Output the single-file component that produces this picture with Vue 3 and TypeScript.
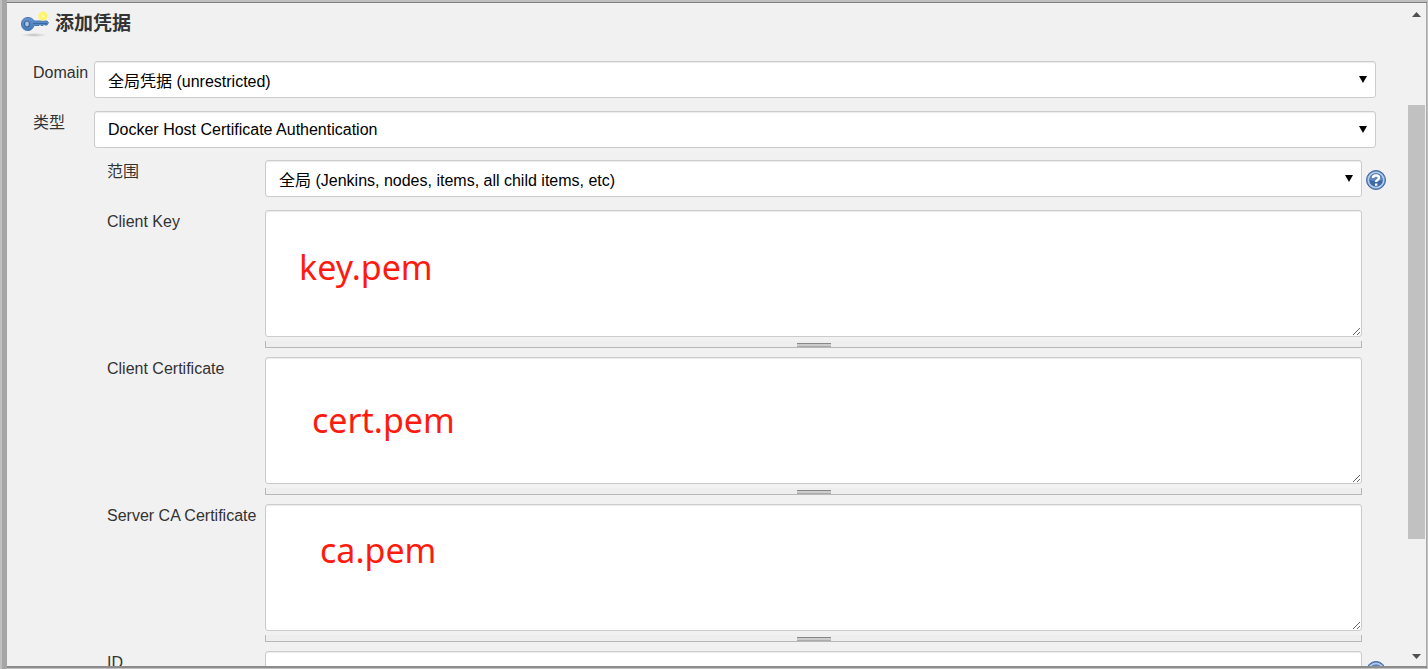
<script setup lang="ts">
import { ref } from 'vue'

interface KeyField {
  id: string
  label: string
  note: string
  value: string
}

const domain = ref('global')
const kind = ref('docker')
const scope = ref('global')
const credentialId = ref('')
const fields = ref<KeyField[]>([
  { id: 'client-key', label: 'Client Key', note: 'key.pem', value: '' },
  { id: 'client-cert', label: 'Client Certificate', note: 'cert.pem', value: '' },
  { id: 'server-ca', label: 'Server CA Certificate', note: 'ca.pem', value: '' },
])
</script>

<template>
  <div class="backdrop">
    <div class="behind">Content Token Reference</div>
    <main class="dialog">
      <form class="content" @submit.prevent>
        <h1 class="title">
          <svg class="key" viewBox="0 0 32 28" aria-hidden="true">
            <defs>
              <radialGradient id="glow">
                <stop offset="0" stop-color="#ffffc8" />
                <stop offset="0.45" stop-color="#fff458" />
                <stop offset="0.75" stop-color="#fff36b" stop-opacity="0.8" />
                <stop offset="1" stop-color="#fff78a" stop-opacity="0" />
              </radialGradient>
              <linearGradient id="steel" x1="0" y1="0" x2="0" y2="1">
                <stop offset="0" stop-color="#6795cf" />
                <stop offset="1" stop-color="#4379ba" />
              </linearGradient>
              <radialGradient id="shade">
                <stop offset="0" stop-color="#777" stop-opacity="0.4" />
                <stop offset="1" stop-color="#777" stop-opacity="0" />
              </radialGradient>
            </defs>
            <ellipse cx="13" cy="25" rx="13" ry="2" fill="url(#shade)" />
            <path
              d="M7 7.500C10 7.500 12 9 13 11H26L27.500 12.500 26 15H24L23 14.500 22 15.500H20L19 14.500 18 15.500H13C12 18.500 10 20.500 7 20.500C3 20.500 0.500 18 0.500 14S3 7.500 7 7.500Z"
              fill="url(#steel)" stroke="#4877b3" stroke-width="1"
            />
            <path d="M12 13.500H26" stroke="#3768a5" stroke-width="1" />
            <ellipse cx="6" cy="14" rx="2.5" ry="3" fill="#a9c4e6" stroke="#3b659c" stroke-width="1.2" />
            <circle cx="22" cy="6" r="5.5" fill="url(#glow)" />
          </svg>
          添加凭据
        </h1>

        <div class="row">
          <label class="label" for="domain">Domain</label>
          <div class="picker">
            <select id="domain" v-model="domain" class="control cjk">
              <option value="global">全局凭据 (unrestricted)</option>
            </select>
            <svg class="arrow" viewBox="0 0 8 8" aria-hidden="true"><path d="M0 1H8L4 8Z" /></svg>
          </div>
        </div>
        <div class="row">
          <label class="label" for="kind">类型</label>
          <div class="picker">
            <select id="kind" v-model="kind" class="control">
              <option value="docker">Docker Host Certificate Authentication</option>
            </select>
            <svg class="arrow" viewBox="0 0 8 8" aria-hidden="true"><path d="M0 1H8L4 8Z" /></svg>
          </div>
        </div>

        <div class="details">
          <div class="row">
            <label class="label" for="scope">范围</label>
            <div class="picker">
              <select id="scope" v-model="scope" class="control cjk">
                <option value="global">全局 (Jenkins, nodes, items, all child items, etc)</option>
              </select>
              <svg class="arrow" viewBox="0 0 8 8" aria-hidden="true"><path d="M0 1H8L4 8Z" /></svg>
            </div>
            <button type="button" class="help" aria-label="Help">
              <svg viewBox="0 0 20 20" aria-hidden="true">
                <circle cx="10" cy="10" r="9.5" fill="#4f78b4" stroke="#456ca5" />
                <circle cx="10" cy="10" r="7.7" fill="#3d68a9" stroke="#b4cae6" stroke-width="1.8" />
                <path d="M3.500 10A6.500 6.500 0 0 1 16.500 10Q10 12 3.500 10Z" fill="#6288bf" />
                <path d="M7 8Q7 5.500 10 5.500T13 8Q13 9 11.500 10T10 12" fill="none" stroke="#fff" stroke-width="2.4" />
                <rect x="9" y="13.500" width="2.4" height="2.2" fill="#fff" />
              </svg>
            </button>
          </div>

          <div v-for="field in fields" :key="field.id" class="row tall">
            <label class="label" :for="field.id">{{ field.label }}</label>
            <div class="area">
              <textarea :id="field.id" v-model="field.value" class="control text"></textarea>
              <span class="note" :class="field.id">{{ field.note }}</span>
              <div class="grip"><span class="bar"></span></div>
            </div>
          </div>

          <div class="row">
            <label class="label" for="cred-id">ID</label>
            <div class="picker">
              <input id="cred-id" v-model="credentialId" type="text" class="control" />
            </div>
            <button type="button" class="help" aria-label="Help for ID">
              <svg viewBox="0 0 20 20" aria-hidden="true">
                <circle cx="10" cy="10" r="9.5" fill="#4f78b4" stroke="#456ca5" />
                <circle cx="10" cy="10" r="7.7" fill="#5c83bb" stroke="#b4cae6" stroke-width="1.8" />
              </svg>
            </button>
          </div>
        </div>
      </form>
      <div class="scroll" aria-hidden="true">
        <svg class="step" viewBox="0 0 17 17"><path d="M4 11H13L8.500 6Z" /></svg>
        <div class="track"><div class="thumb"></div></div>
        <svg class="step" viewBox="0 0 17 17"><path d="M4 6H13L8.500 11Z" /></svg>
      </div>
    </main>
  </div>
</template>

<style>
body {
  margin: 0;
  overflow: hidden;
}
</style>

<style scoped>
* {
  box-sizing: border-box;
}
.backdrop {
  position: relative;
  display: flex;
  height: 100vh;
  padding: 2px 1px 1px 7px;
  overflow: hidden;
  background: linear-gradient(90deg, #c0c0c0 2px, #a6a6a6 2px, #a6a6a6 7px, #c0c0c0 7px);
  color: #333;
  font: 16px/20px "Liberation Sans", "Noto Sans CJK SC", sans-serif;
}
.behind {
  position: absolute;
  top: -14px;
  left: 278px;
  color: #222;
  line-height: 18px;
}
.dialog {
  position: relative;
  display: flex;
  flex: 1;
  min-width: 0;
  overflow: hidden;
  border-top: 1px solid #808080;
  border-bottom: 2px solid #8c8c8c;
  background: #f1f1f1;
}
.content {
  flex: 1;
  min-width: 0;
  padding: 0 32px 0 26px;
}
.title {
  display: flex;
  align-items: center;
  height: 42px;
  margin: 0 0 16px -12px;
  gap: 2px;
  font-size: 19px;
  line-height: 24px;
}
.key {
  width: 32px;
  height: 28px;
}
.row {
  display: flex;
  align-items: flex-start;
  margin-bottom: 13px;
}
.label {
  flex: none;
  width: 61px;
  padding-top: 2px;
  white-space: nowrap;
}
.details {
  margin: -1px -10px 0 74px;
}
.details .label {
  width: 158px;
}
.picker,
.area {
  position: relative;
  flex: 1;
  min-width: 0;
}
.details .area {
  margin-right: 24px;
}
.control {
  display: block;
  width: 100%;
  height: 37px;
  margin: 0;
  padding: 0 30px 0 13px;
  appearance: none;
  border: 1px solid #ccc;
  border-radius: 3px;
  outline: none;
  background: #fff;
  box-shadow: inset 0 1px 1px rgba(0, 0, 0, 0.08);
  color: #000;
  font: inherit;
}
.cjk {
  padding-top: 4px;
}
.arrow {
  position: absolute;
  top: 14px;
  right: 9px;
  width: 8px;
  height: 8px;
  pointer-events: none;
}
.help {
  flex: none;
  width: 20px;
  height: 20px;
  margin: 10px 0 0 4px;
  padding: 0;
  border: 0;
  background: none;
}
.help svg {
  display: block;
}
.tall {
  margin-bottom: 9px;
}
.text {
  height: 127px;
  resize: vertical;
}
.note {
  position: absolute;
  top: 34px;
  left: 34px;
  color: #ff1a0e;
  font: 34px/46px "Noto Sans", sans-serif;
  pointer-events: none;
}
.client-cert {
  top: 40px;
  left: 47px;
}
.server-ca {
  top: 23px;
  left: 55px;
}
.grip {
  display: flex;
  justify-content: center;
  height: 7px;
  margin-top: 4px;
  border: 1px solid #b8b8b8;
  border-top: 0;
  background: #eee;
}
.bar {
  width: 34px;
  height: 4px;
  margin-top: 2px;
  border-top: 1px solid #888;
  border-bottom: 1px solid #aaa;
  background: #ccc;
}
.scroll {
  display: flex;
  flex: none;
  flex-direction: column;
  width: 19px;
  padding: 3px 1px 1px 0;
  border-right: 1px solid #aaa;
}
.step {
  flex: none;
  width: 17px;
  height: 17px;
  fill: #505050;
}
.track {
  display: grid;
  flex: 1;
  grid-template-rows: 82fr 434fr 109fr;
}
.thumb {
  grid-row: 2;
  background: #c1c1c1;
}
</style>
